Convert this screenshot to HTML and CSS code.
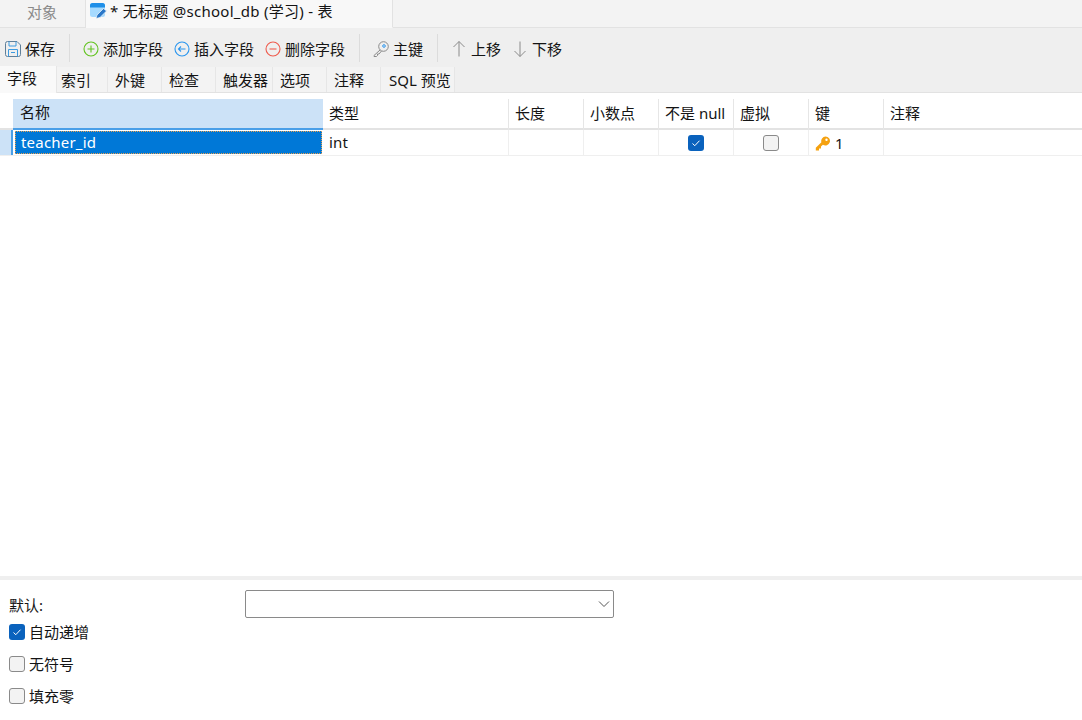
FILE: index.html
```html
<!DOCTYPE html>
<html lang="zh">
<head>
<meta charset="utf-8">
<title>无标题 @school_db (学习) - 表</title>
<link rel="stylesheet" href="styles.css">
</head>
<body>
<div class="app">
  <div class="doc-tabs">
    <div class="doc-tab objects">对象</div>
    <div class="doc-tab active">
      <svg class="ico-16" viewBox="0 0 17 16" width="17" height="16"><rect x="0" y="0" width="15" height="14" rx="2.500" fill="#a6daff"/><path d="M0 2.500a2.500 2.500 0 0 1 2.500-2.500h10a2.500 2.500 0 0 1 2.500 2.500v2H0z" fill="#1f8fe8"/><path d="M6 15.500l1-3.500 6.500-6.500 3 2.500-6.500 6.500z" fill="#2b78c9" stroke="#f8f8f8" stroke-width="0.700"/></svg>
      <span class="latin-wide">* 无标题 @school_db (学习) - 表</span>
    </div>
  </div>
  <div class="toolbar">
    <button class="tool save">
      <svg viewBox="0 0 16 16" width="16" height="16" fill="none" stroke="#5f7f99" stroke-width="1"><path d="M0.500 2.500a2 2 0 0 1 2-2h9.500l3.500 3.500v9.500a2 2 0 0 1-2 2h-11a2 2 0 0 1-2-2z"/><path d="M4 0.500v4.500h7v-4.500" stroke="#3d9be0"/><path d="M3.500 15.500v-7h9v7" stroke="#3d9be0"/><path d="M6 11.500h4" stroke="#3d9be0"/></svg>
      <span>保存</span>
    </button>
    <i class="sep"></i>
    <button class="tool add">
      <svg viewBox="0 0 16 16" width="16" height="16" fill="none" stroke="#62c320" stroke-width="1.100"><circle cx="8" cy="8" r="7"/><path d="M8 4.500v7M4.500 8h7"/></svg>
      <span>添加字段</span>
    </button>
    <button class="tool insert">
      <svg viewBox="0 0 16 16" width="16" height="16" fill="none" stroke="#2b96ee" stroke-width="1.100"><circle cx="8" cy="8" r="7"/><path d="M11.500 8h-7M7 5.500l-2.500 2.500 2.500 2.500"/></svg>
      <span>插入字段</span>
    </button>
    <button class="tool del">
      <svg viewBox="0 0 16 16" width="16" height="16" fill="none" stroke="#ef5b4d" stroke-width="1.100"><circle cx="8" cy="8" r="7"/><path d="M4.500 8h7"/></svg>
      <span>删除字段</span>
    </button>
    <i class="sep"></i>
    <button class="tool key">
      <svg viewBox="0 0 16 16" width="16" height="16" fill="none" stroke="#8a8a8a" stroke-width="1"><circle cx="10.500" cy="5.500" r="4.800"/><circle cx="11" cy="5" r="1.300" stroke="#2b96ee"/><path d="M7 9l-6 5.500v1h2.500l1-1v-1.500h1.500l2.500-3"/></svg>
      <span>主键</span>
    </button>
    <i class="sep"></i>
    <button class="tool up">
      <svg viewBox="0 0 16 16" width="16" height="16" fill="none" stroke="#8a8a8a" stroke-width="1"><path d="M8 15.500V0.500M2.500 6L8 0.500 13.500 6"/></svg>
      <span>上移</span>
    </button>
    <button class="tool down">
      <svg viewBox="0 0 16 16" width="16" height="16" fill="none" stroke="#8a8a8a" stroke-width="1"><path d="M8 0.500v15M2.500 10L8 15.500 13.500 10"/></svg>
      <span>下移</span>
    </button>
  </div>
  <div class="sub-tabs">
    <div class="sub-tab active w-active">字段</div>
    <div class="sub-tab w-second">索引</div>
    <div class="sub-tab w-54">外键</div>
    <div class="sub-tab w-54">检查</div>
    <div class="sub-tab w-57">触发器</div>
    <div class="sub-tab w-54">选项</div>
    <div class="sub-tab w-54">注释</div>
    <div class="sub-tab w-sql">SQL 预览</div>
  </div>
  <div class="table-area">
    <div class="grid-row head">
      <div class="cell gutter"></div>
      <div class="cell name selected-head">名称</div>
      <div class="cell">类型</div>
      <div class="cell">长度</div>
      <div class="cell">小数点</div>
      <div class="cell">不是 null</div>
      <div class="cell">虚拟</div>
      <div class="cell">键</div>
      <div class="cell last">注释</div>
    </div>
    <div class="grid-row body">
      <div class="cell gutter"><span class="marker"></span></div>
      <div class="cell name editing"><span class="latin">teacher_id</span></div>
      <div class="cell"><span class="latin">int</span></div>
      <div class="cell"></div>
      <div class="cell"></div>
      <div class="cell center"><span class="check on"><svg viewBox="0 0 16 16" width="16" height="16" fill="none" stroke="#fff" stroke-width="1"><path d="M4.500 8.500l2.300 2.200 4.700-5"/></svg></span></div>
      <div class="cell center"><span class="check"></span></div>
      <div class="cell keycell">
        <svg viewBox="0 0 16 16" width="16" height="16" fill="#f5a10f"><path d="M10.500 1.500a4.500 4.500 0 1 1-2.600 8.200l-1.900 1.900v2H4v1.900H0.800v-2.700l5.600-5.500a4.500 4.500 0 0 1 4.100-5.800zM11.500 3.500a1.200 1.200 0 1 0 0 2.400 1.200 1.200 0 0 0 0-2.400z" fill-rule="evenodd"/></svg>
        <span>1</span>
      </div>
      <div class="cell last"></div>
    </div>
  </div>
  <div class="bottom">
    <div class="default-row">
      <label class="default-label">默认:</label>
      <div class="select">
        <svg viewBox="0 0 12 8" width="12" height="8" fill="none" stroke="#555" stroke-width="1"><path d="M1 1.500l5 5 5-5"/></svg>
      </div>
    </div>
    <div class="opt"><span class="check on"><svg viewBox="0 0 16 16" width="16" height="16" fill="none" stroke="#fff" stroke-width="1"><path d="M4.500 8.500l2.300 2.200 4.700-5"/></svg></span><span class="opt-text">自动递增</span></div>
    <div class="opt"><span class="check"></span><span class="opt-text">无符号</span></div>
    <div class="opt"><span class="check"></span><span class="opt-text">填充零</span></div>
  </div>
</div>
</body>
</html>
```

FILE: styles.css
```css
* { box-sizing: border-box; }
html, body { margin: 0; padding: 0; height: 100%; background: #fff; }
body {
  font-family: "Noto Sans", "Noto Sans CJK SC", sans-serif;
  font-size: 15px;
  color: #141414;
  overflow: hidden;
}
.app { width: 1082px; height: 720px; display: flex; flex-direction: column; }
.latin { letter-spacing: 0.2px; margin-top: -2px; }
.latin-wide { letter-spacing: 0.28px; }

.doc-tabs { height: 28px; display: flex; background: #f3f3f3; border-bottom: 1px solid #e2e2e2; }
.doc-tab { height: 28px; display: flex; align-items: center; white-space: nowrap; padding-bottom: 6px; }
.objects { width: 86px; padding-left: 27px; color: #8a8a8a; border-right: 1px solid #e2e2e2; }
.active.doc-tab { width: 307px; padding-left: 4px; background: #f8f8f8; border-right: 1px solid #e2e2e2; border-bottom: 1px solid #f8f8f8; gap: 3px; }
.ico-16 { flex: none; }

.toolbar { height: 39px; display: flex; align-items: center; background: #efefef; padding: 2px 0 0 5px; }
.tool { display: flex; align-items: center; gap: 4px; border: 0; padding: 0; background: none; font: inherit; color: #141414; white-space: nowrap; }
.tool svg { flex: none; }
.tool span { line-height: 20px; }
.sep { width: 1px; height: 28px; background: #dcdcdc; margin: -2px 13px 0 14px; flex: none; }
.insert, .del, .down { margin-left: 11px; }

.sub-tabs { height: 26px; display: flex; background: #efefef; border-bottom: 1px solid #e2e2e2; }
.sub-tab { height: 25px; display: flex; align-items: center; padding-left: 7px; border-right: 1px solid #e6e6e6; background: #f3f3f3; white-space: nowrap; }
.sub-tab.active { background: #f9f9f9; height: 27px; margin-top: -1px; padding-bottom: 5px; }
.w-active { width: 57px; }
.w-second { width: 51px; padding-left: 4px; }
.w-54 { width: 54px; }
.w-57 { width: 57px; }
.w-sql { width: 74px; padding-left: 8px; }

.table-area { flex: 1; padding-top: 6px; background: #fff; }
.grid-row { display: grid; grid-template-columns: 13px 310px 186px 75px 75px 75px 75px 75px 1fr; }
.head { height: 31px; border-bottom: 2px solid #e3e3e3; }
.head .cell { padding-bottom: 4px; }
.body { height: 26px; border-bottom: 1px solid #efefef; }
.cell { display: flex; align-items: center; padding-left: 6px; border-right: 1px solid #efefef; white-space: nowrap; min-width: 0; }
.head .cell { border-right-color: #e6e6e6; }
.cell.last { border-right: 0; }
.cell.gutter { padding: 0; border-right: 0; }
.head .selected-head { background: #cce2f7; padding-left: 7px; border-right: 0; border-bottom: 2px solid #4a9fe8; height: 31px; }
.marker { display: block; width: 13px; height: 25px; background: #cce2f7; border-right: 2px solid #4a9fe8; }
.cell.editing { background: #0078d7; color: #fff; padding-left: 5px; margin: 1px 1px 1px 2px; border: 1px dotted #e8a050; height: 23px; }
.center { justify-content: center; padding-left: 0; }
.check { display: inline-flex; width: 16px; height: 16px; border: 1px solid #8a8a8a; border-radius: 3px; background: #f3f3f3; flex: none; }
.check.on { background: #0a62bd; border: 0; }
.keycell { gap: 4px; padding-left: 6px; }

.bottom { height: 144px; border-top: 4px solid #efefef; padding: 10px 0 0 9px; background: #fff; }
.default-row { display: flex; height: 26px; align-items: flex-start; }
.default-label { width: 236px; line-height: 22px; padding-top: 4px; }
.select { width: 369px; height: 28px; flex: none; border: 1px solid #8a8a8a; border-radius: 2px; display: flex; align-items: center; justify-content: flex-end; padding-right: 3px; background: #fff; }
.opt { height: 32px; display: flex; align-items: center; gap: 4px; white-space: nowrap; }
.opt-text { margin-top: -1px; }
```
